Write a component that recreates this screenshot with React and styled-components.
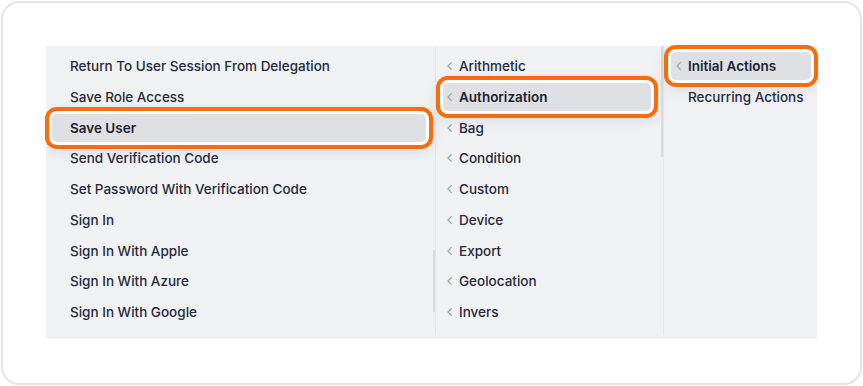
import React from "react"
import styled, { createGlobalStyle, css } from "styled-components"

const GlobalStyle = createGlobalStyle`
  html, body {
    margin: 0;
    padding: 0;
    background: #ffffff;
  }
  body {
    font-family: "Inter", "Liberation Sans", sans-serif;
    -webkit-font-smoothing: antialiased;
  }
`

const Card = styled.div`
  box-sizing: border-box;
  margin: 1px;
  width: 861px;
  height: 384px;
  padding: 43px;
  border: 2px solid #e3e5e9;
  border-radius: 18px;
  background: #ffffff;
`

const Panel = styled.div`
  box-sizing: border-box;
  display: flex;
  height: 293px;
  padding-bottom: 4px;
  background: #f0f1f3;
`

const Column = styled.div`
  position: relative;
  box-sizing: border-box;
  flex: 0 0 ${props => props.width}px;
  display: flex;
  flex-direction: column;
  gap: 2.75px;
  padding: 6px ${props => props.padRight}px 0 ${props => props.padLeft}px;
  border-left: ${props => (props.divided ? "1px solid #e2e4e8" : "none")};
`

const Thumb = styled.div`
  position: absolute;
  right: 0;
  top: ${props => props.top}px;
  width: 2px;
  height: ${props => props.height}px;
  border-radius: 1px;
  background: #d8dade;
`

const Item = styled.div`
  position: relative;
  box-sizing: border-box;
  display: flex;
  align-items: center;
  gap: 3px;
  height: 28px;
  flex: 0 0 28px;
  padding-left: ${props => props.indent}px;
  border-radius: 5px;
  font-size: 13.5px;
  font-weight: 500;
  color: #252b3a;
  white-space: nowrap;

  ${props =>
    props.active &&
    css`
      background: #dfe0e4;
      font-weight: 600;
      color: #1d2231;
      box-shadow: 0 0 0 3px #ffffff, 0 0 0 7px #fa6b0c,
        0 4px 14px 6px rgba(30, 35, 50, 0.1);
    `}
`

const ChevronBox = styled.span`
  display: inline-flex;
  width: 9px;
  height: 10px;
  flex: 0 0 9px;
`

const Chevron = ({ hidden }) => (
  <ChevronBox>
    {!hidden && (
      <svg width="9" height="10" viewBox="0 0 9 10" fill="none">
        <path
          d="M4.3 1.6 L1 5 L4.3 8.4"
          stroke="#9ea3ad"
          strokeWidth="1.3"
          strokeLinecap="round"
          strokeLinejoin="round"
        />
      </svg>
    )}
  </ChevronBox>
)

const actions = [
  "Return To User Session From Delegation",
  "Save Role Access",
  "Save User",
  "Send Verification Code",
  "Set Password With Verification Code",
  "Sign In",
  "Sign In With Apple",
  "Sign In With Azure",
  "Sign In With Google",
]

const categories = [
  "Arithmetic",
  "Authorization",
  "Bag",
  "Condition",
  "Custom",
  "Device",
  "Export",
  "Geolocation",
  "Invers",
]

const triggers = [
  { label: "Initial Actions", chevron: true },
  { label: "Recurring Actions", chevron: false },
]

export default function App() {
  return (
    <>
      <GlobalStyle />
      <Card>
        <Panel>
          <Column width={389} padLeft={6} padRight={9}>
            {actions.map(a => (
              <Item key={a} indent={18} active={a === "Save User"}>
                {a}
              </Item>
            ))}
            <Thumb top={204} height={62} />
          </Column>
          <Column width={228} padLeft={7} padRight={12} divided>
            {categories.map(c => (
              <Item key={c} indent={4} active={c === "Authorization"}>
                <Chevron />
                {c}
              </Item>
            ))}
            <Thumb top={0} height={111} />
          </Column>
          <Column width={154} padLeft={7} padRight={6} divided>
            {triggers.map(t => (
              <Item key={t.label} indent={5} active={t.label === "Initial Actions"}>
                <Chevron hidden={!t.chevron} />
                {t.label}
              </Item>
            ))}
          </Column>
        </Panel>
      </Card>
    </>
  )
}
